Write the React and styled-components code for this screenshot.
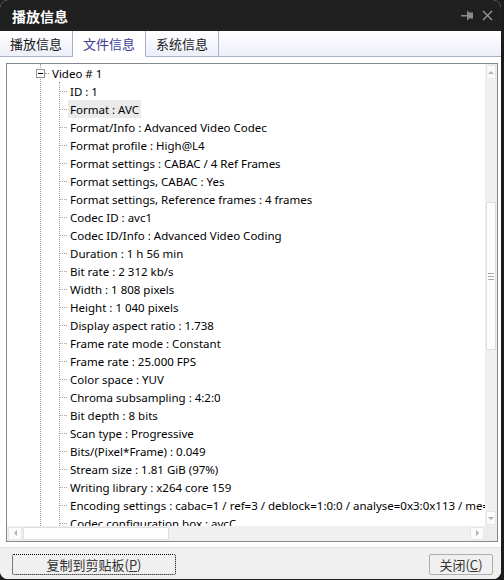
import React from "react";
import styled, { createGlobalStyle } from "styled-components";

const GlobalStyle = createGlobalStyle`
  html, body {
    margin: 0;
    padding: 0;
    background: #1c1c1c;
  }
  body {
    width: 504px;
    height: 580px;
    overflow: hidden;
    font-family: "Noto Sans", "Noto Sans CJK SC", sans-serif;
  }
`;

const CJK = `"Noto Sans CJK SC", "Noto Sans", sans-serif`;

const rows = [
  ["ID", "1"],
  ["Format", "AVC"],
  ["Format/Info", "Advanced Video Codec"],
  ["Format profile", "High@L4"],
  ["Format settings", "CABAC / 4 Ref Frames"],
  ["Format settings, CABAC", "Yes"],
  ["Format settings, Reference frames", "4 frames"],
  ["Codec ID", "avc1"],
  ["Codec ID/Info", "Advanced Video Coding"],
  ["Duration", "1 h 56 min"],
  ["Bit rate", "2 312 kb/s"],
  ["Width", "1 808 pixels"],
  ["Height", "1 040 pixels"],
  ["Display aspect ratio", "1.738"],
  ["Frame rate mode", "Constant"],
  ["Frame rate", "25.000 FPS"],
  ["Color space", "YUV"],
  ["Chroma subsampling", "4:2:0"],
  ["Bit depth", "8 bits"],
  ["Scan type", "Progressive"],
  ["Bits/(Pixel*Frame)", "0.049"],
  ["Stream size", "1.81 GiB (97%)"],
  ["Writing library", "x264 core 159"],
  ["Encoding settings", "cabac=1 / ref=3 / deblock=1:0:0 / analyse=0x3:0x113 / me=hex / subme=7 / psy=1"],
  ["Codec configuration box", "avcC"],
];

const Window = styled.div`
  width: 501px;
  height: 579px;
  background: #fff;
  border-radius: 8px;
  overflow: hidden;
  display: flex;
  flex-direction: column;
`;

const TitleBar = styled.div`
  height: 31px;
  flex: none;
  background: #202020;
  display: flex;
  align-items: center;
  padding: 0 8px 0 12px;
  color: #fff;
`;

const Title = styled.div`
  font-family: ${CJK};
  font-size: 14px;
  font-weight: 700;
`;

const TitleButtons = styled.div`
  margin-left: auto;
  display: flex;
  align-items: center;
  gap: 9px;
`;

const TabBar = styled.div`
  height: 26px;
  flex: none;
  display: flex;
  background: linear-gradient(#ffffff, #eceef9);
`;

const Tab = styled.div`
  display: flex;
  align-items: center;
  padding: 0 10px;
  font-family: ${CJK};
  font-size: 13px;
  color: ${(p) => (p.$active ? "#3d3d96" : "#1a1a1a")};
  background: ${(p) => (p.$active ? "#fff" : "transparent")};
  border-right: 1px solid #a9b0cf;
  border-bottom: 1px solid ${(p) => (p.$active ? "transparent" : "#a9b0cf")};
`;

const TabFill = styled.div`
  flex: 1;
  border-bottom: 1px solid #a9b0cf;
`;

const Body = styled.div`
  flex: 1;
  display: flex;
  flex-direction: column;
  padding: 6px 3px 5px 6px;
  background: #fff;
`;

const TreeBox = styled.div`
  height: 477px;
  border: 1px solid #828790;
  display: grid;
  grid-template-columns: 1fr 12px;
  grid-template-rows: 1fr 15px;
`;

const TreeArea = styled.div`
  overflow: hidden;
  position: relative;
  font-size: 11.5px;
  color: #000;
  white-space: nowrap;
`;

const Branch = styled.div`
  margin-left: 33px;
  border-left: 1px dotted #a0a0a0;
`;

const NodeRow = styled.div`
  position: relative;
  height: 18px;
  display: flex;
  align-items: center;
  padding-left: 9px;

  &::before {
    content: "";
    position: absolute;
    left: 4px;
    width: 4px;
    top: 9px;
    border-top: 1px dotted #a0a0a0;
  }
`;

const Expander = styled.span`
  position: absolute;
  left: -5px;
  top: 5px;
  width: 7px;
  height: 7px;
  border: 1px solid #919191;
  background: #fff;
  display: flex;
  align-items: center;
  justify-content: center;

  &::after {
    content: "";
    width: 5px;
    height: 1px;
    background: #000;
  }
`;

const Children = styled.div`
  margin-left: 18px;
  border-left: 1px dotted #a0a0a0;
`;

const Leaf = styled.div`
  position: relative;
  height: 18px;
  display: flex;
  align-items: center;
  padding-left: 8px;

  &::before {
    content: "";
    position: absolute;
    left: 0;
    width: 7px;
    top: 9px;
    border-top: 1px dotted #a0a0a0;
  }
`;

const Label = styled.span`
  display: block;
  height: 18px;
  line-height: 20px;
  overflow: hidden;
  padding: 0 2px;
  background: ${(p) => (p.$selected ? "#eaeaea" : "transparent")};
`;

const VScroll = styled.div`
  background: #f0f0f0;
  display: flex;
  flex-direction: column;
`;

const HScroll = styled.div`
  background: #f0f0f0;
  display: flex;
  align-items: stretch;
`;

const ArrowBtn = styled.div`
  flex: none;
  width: ${(p) => (p.$horizontal ? "12px" : "auto")};
  height: ${(p) => (p.$horizontal ? "auto" : "12px")};
  margin: 1px;
  background: #fbfbfb;
  border: 1px solid #e6e6e6;
  display: flex;
  align-items: center;
  justify-content: center;
`;

const Thumb = styled.div`
  flex: none;
  background: #fdfdfd;
  border: 1px solid #dedede;
  display: flex;
  flex-direction: column;
  align-items: center;
  justify-content: center;
  gap: 2px;
`;

const VThumb = styled(Thumb)`
  margin: 0 1px;
  height: 146px;
`;

const HThumb = styled(Thumb)`
  margin: 1px 0;
  width: 144px;
`;

const Grip = styled.span`
  width: 6px;
  height: 1px;
  background: #a8a8a8;
`;

const Corner = styled.div`
  background: #ececec;
`;

const ButtonBar = styled.div`
  flex: none;
  height: 32px;
  border-top: 1px solid #e3e3e3;
  background: #f0f0f0;
  display: flex;
  justify-content: space-between;
  align-items: flex-start;
  padding: 6px 8px 0 12px;
`;

const Button = styled.button`
  height: 21px;
  width: ${(p) => p.$width}px;
  padding: 0;
  font-family: ${CJK};
  font-size: 13px;
  line-height: 19px;
  color: #333;
  background: #f0f0f0;
  border: 1px ${(p) => (p.$focused ? "dotted #000" : "solid #adadad")};
  border-radius: 2px;

  u {
    text-decoration: underline;
    text-underline-offset: 1px;
  }
`;

function Triangle({ dir }) {
  const pts = {
    up: "0,4 3,1 6,4",
    down: "0,1 3,4 6,1",
    left: "4,0 1,3 4,6",
    right: "1,0 4,3 1,6",
  }[dir];
  const w = dir === "up" || dir === "down" ? 7 : 5;
  const h = dir === "up" || dir === "down" ? 5 : 7;
  return (
    <svg width={w} height={h} viewBox={`0 0 ${w} ${h}`}>
      <polygon points={pts} fill="#b0b0b0" />
    </svg>
  );
}

export default function App() {
  return (
    <>
      <GlobalStyle />
      <Window>
        <TitleBar>
          <Title>播放信息</Title>
          <TitleButtons>
            <svg width="12" height="10" viewBox="0 0 12 10">
              <rect x="0" y="4" width="6" height="1.5" fill="#8a8a8a" />
              <rect x="6" y="0" width="1.5" height="9" fill="#8a8a8a" />
              <rect x="7" y="1.5" width="5" height="6" fill="#8a8a8a" />
            </svg>
            <svg width="11" height="11" viewBox="0 0 11 11">
              <path d="M1 1 L10 10 M10 1 L1 10" stroke="#9a9a9a" strokeWidth="1.3" />
            </svg>
          </TitleButtons>
        </TitleBar>
        <TabBar>
          <Tab>播放信息</Tab>
          <Tab $active>文件信息</Tab>
          <Tab>系统信息</Tab>
          <TabFill />
        </TabBar>
        <Body>
          <TreeBox>
            <TreeArea>
              <Branch>
                <NodeRow>
                  <Expander />
                  <Label>Video # 1</Label>
                </NodeRow>
                <Children>
                  {rows.map(([k, v]) => (
                    <Leaf key={k}>
                      <Label $selected={k === "Format"}>
                        {k} : {v}
                      </Label>
                    </Leaf>
                  ))}
                </Children>
              </Branch>
            </TreeArea>
            <VScroll>
              <ArrowBtn>
                <Triangle dir="up" />
              </ArrowBtn>
              <div style={{ height: 122 }} />
              <VThumb>
                <Grip />
                <Grip />
                <Grip />
              </VThumb>
              <div style={{ flex: 1 }} />
              <ArrowBtn>
                <Triangle dir="down" />
              </ArrowBtn>
            </VScroll>
            <HScroll>
              <ArrowBtn $horizontal>
                <Triangle dir="left" />
              </ArrowBtn>
              <HThumb />
              <div style={{ flex: 1 }} />
              <ArrowBtn $horizontal>
                <Triangle dir="right" />
              </ArrowBtn>
            </HScroll>
            <Corner />
          </TreeBox>
        </Body>
        <ButtonBar>
          <Button $width={164} $focused>
            复制到剪贴板(<u>P</u>)
          </Button>
          <Button $width={64}>
            关闭(<u>C</u>)
          </Button>
        </ButtonBar>
      </Window>
    </>
  );
}
